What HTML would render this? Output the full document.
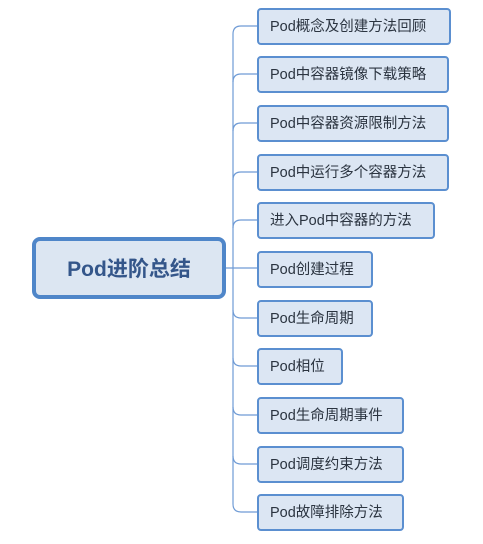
<!DOCTYPE html>
<html><head><meta charset="utf-8"><style>
body{margin:0;width:483px;height:544px;background:#fff;position:relative;overflow:hidden;font-family:"Liberation Sans","Noto Sans CJK SC",sans-serif}
.b{position:absolute;left:257px;border:2px solid #5b8fd0;border-radius:4px;background:#dce6f3;box-sizing:border-box;height:37px;font-size:14.5px;color:#2b3440;line-height:1;padding:2px 0 0 11px;white-space:nowrap;display:flex;align-items:center}
.c{position:absolute;left:32px;top:237px;width:194px;height:62px;border:4px solid #4f86c9;border-radius:8px;background:#dce6f2;box-sizing:border-box;font-size:21px;font-weight:bold;color:#34568a;line-height:1;padding-top:3px;display:flex;align-items:center;justify-content:center}
</style></head><body>
<svg width="483" height="544" style="position:absolute;left:0;top:0">
<g fill="none" stroke="#6f9bd5" stroke-width="1.2">
<path d="M226 268 H257"/>
<path d="M233 34 V504"/>
<path d="M257 26 H241 Q233 26 233 34"/>
<path d="M233 504 Q233 512 241 512 H257"/>
<path d="M257 74 H241 Q233 74 233 82"/>
<path d="M257 123 H241 Q233 123 233 131"/>
<path d="M257 172 H241 Q233 172 233 180"/>
<path d="M257 220 H241 Q233 220 233 228"/>
<path d="M233 310 Q233 318 241 318 H257"/>
<path d="M233 358 Q233 366 241 366 H257"/>
<path d="M233 407 Q233 415 241 415 H257"/>
<path d="M233 456 Q233 464 241 464 H257"/>
</g></svg>
<div class="c">Pod进阶总结</div>
<div class="b" style="top:8px;width:194px">Pod概念及创建方法回顾</div>
<div class="b" style="top:56px;width:192px">Pod中容器镜像下载策略</div>
<div class="b" style="top:105px;width:192px">Pod中容器资源限制方法</div>
<div class="b" style="top:154px;width:192px">Pod中运行多个容器方法</div>
<div class="b" style="top:202px;width:178px">进入Pod中容器的方法</div>
<div class="b" style="top:251px;width:116px">Pod创建过程</div>
<div class="b" style="top:300px;width:116px">Pod生命周期</div>
<div class="b" style="top:348px;width:86px">Pod相位</div>
<div class="b" style="top:397px;width:147px">Pod生命周期事件</div>
<div class="b" style="top:446px;width:147px">Pod调度约束方法</div>
<div class="b" style="top:494px;width:147px">Pod故障排除方法</div>
</body></html>
